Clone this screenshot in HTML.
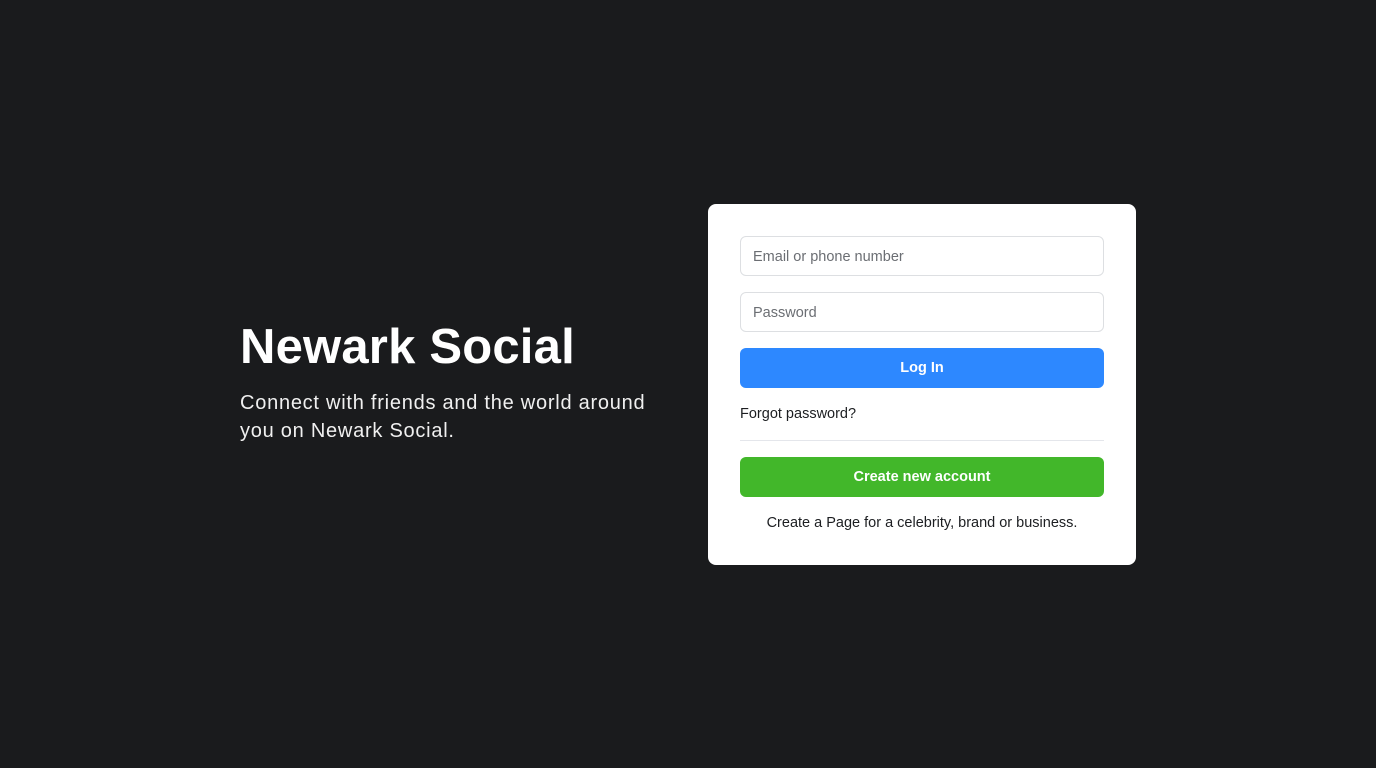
<!DOCTYPE html>
<html><head><style>
body{margin:0;background:#1a1b1d;width:1376px;height:768px;position:relative;font-family:"Liberation Sans",sans-serif;overflow:hidden}
h1{position:absolute;left:240px;top:318px;margin:0;font-size:49px;font-weight:bold;color:#fff;line-height:58px;letter-spacing:0.2px}
p.sub{position:absolute;left:240px;top:389px;margin:0;width:420px;font-size:20px;line-height:28px;color:#f0f0f0;letter-spacing:0.75px}
.card{position:absolute;left:708px;top:204px;width:428px;height:361px;background:#fff;border-radius:8px}
.in{position:absolute;left:32px;height:38px;border:1px solid #dddfe2;border-radius:6px;font-size:14.5px;color:#6b6e73;line-height:40px;padding-left:12px;width:350px}
.btn{position:absolute;left:32px;width:364px;height:40px;border-radius:6px;color:#fff;font-size:14.5px;font-weight:bold;text-align:center;line-height:41px}
.t{position:absolute;font-size:14.5px;color:#1c1e21}
</style></head><body>
<h1>Newark Social</h1>
<p class="sub">Connect with friends and the world around you on Newark Social.</p>
<div class="card">
<div class="in" style="top:32px">Email or phone number</div>
<div class="in" style="top:88px">Password</div>
<div class="btn" style="top:144px;background:#2d88ff">Log In</div>
<div class="t" style="left:32px;top:202px">Forgot password?</div>
<div style="position:absolute;left:32px;top:236px;width:364px;height:1px;background:#e4e6eb"></div>
<div class="btn" style="top:253px;background:#42b72a">Create new account</div>
<div class="t" style="left:0;width:428px;text-align:center;top:311px">Create a Page for a celebrity, brand or business.</div>
</div>
</body></html>
